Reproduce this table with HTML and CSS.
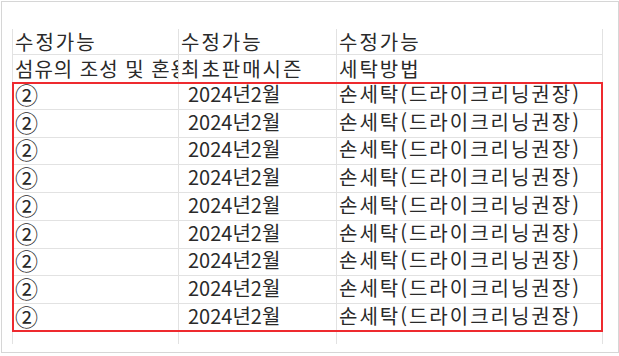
FILE: index.html
```html
<!DOCTYPE html>
<html lang="ko">
<head>
<meta charset="utf-8">
<link rel="stylesheet" href="styles.css">
</head>
<body>
<div class="frame">
  <div class="sheet">
    <div class="row head1">
      <div class="cell">수정가능</div>
      <div class="cell">수정가능</div>
      <div class="cell">수정가능</div>
    </div>
    <div class="row head2">
      <div class="cell tight">섬유의 조성 및 혼용률</div>
      <div class="cell">최초판매시즌</div>
      <div class="cell">세탁방법</div>
    </div>
    <div class="data">
      <div class="row item"><div class="cell c1">②</div><div class="cell c2">2024년2월</div><div class="cell c3">손세탁(드라이크리닝권장)</div></div>
      <div class="row item"><div class="cell c1">②</div><div class="cell c2">2024년2월</div><div class="cell c3">손세탁(드라이크리닝권장)</div></div>
      <div class="row item"><div class="cell c1">②</div><div class="cell c2">2024년2월</div><div class="cell c3">손세탁(드라이크리닝권장)</div></div>
      <div class="row item"><div class="cell c1">②</div><div class="cell c2">2024년2월</div><div class="cell c3">손세탁(드라이크리닝권장)</div></div>
      <div class="row item"><div class="cell c1">②</div><div class="cell c2">2024년2월</div><div class="cell c3">손세탁(드라이크리닝권장)</div></div>
      <div class="row item"><div class="cell c1">②</div><div class="cell c2">2024년2월</div><div class="cell c3">손세탁(드라이크리닝권장)</div></div>
      <div class="row item"><div class="cell c1">②</div><div class="cell c2">2024년2월</div><div class="cell c3">손세탁(드라이크리닝권장)</div></div>
      <div class="row item"><div class="cell c1">②</div><div class="cell c2">2024년2월</div><div class="cell c3">손세탁(드라이크리닝권장)</div></div>
      <div class="row item"><div class="cell c1">②</div><div class="cell c2">2024년2월</div><div class="cell c3">손세탁(드라이크리닝권장)</div></div>
    </div>
    <div class="row tail">
      <div class="cell"></div>
      <div class="cell"></div>
      <div class="cell"></div>
    </div>
  </div>
</div>
</body>
</html>
```

FILE: styles.css
```css
html, body {
  margin: 0;
  padding: 0;
  background: #ffffff;
}

.frame {
  box-sizing: border-box;
  margin: 1px 0 0 1px;
  width: 618px;
  height: 352px;
  border: 1px solid #d6d6d6;
  padding: 27px 0 0 10px;
}

.sheet {
  width: 591px;
  font-family: "Noto Sans CJK KR", "Noto Sans", sans-serif;
  font-size: 20px;
  color: #2a2a2a;
}

.row {
  display: grid;
  grid-template-columns: 166px 158px 267px;
  box-sizing: border-box;
}

.cell {
  box-sizing: border-box;
  border-left: 1px solid #e2e2e2;
  white-space: nowrap;
  padding-left: 2px;
  display: flex;
  align-items: center;
  line-height: 1.1;
  letter-spacing: 2px;
}

.cell:last-child {
  border-right: 1px solid #e2e2e2;
}

.cell.tight {
  letter-spacing: 1px;
  overflow: hidden;
}

.head1 {
  height: 26px;
  border-bottom: 1px solid #e2e2e2;
}

.head2 {
  height: 27px;
}

.data {
  position: relative;
  width: 591px;
}

.data::after {
  content: "";
  position: absolute;
  left: 0;
  top: 0;
  right: 0;
  bottom: 0;
  border: 2px solid #ee2a2f;
  pointer-events: none;
}

.item {
  height: 27.75px;
  border-bottom: 1px solid #e2e2e2;
}

.item .cell {
  padding-bottom: 3px;
}

.item .c1 {
  padding-left: 2px;
  padding-bottom: 2px;
  font-size: 23px;
  line-height: 1;
  letter-spacing: 0;
}

.item .c2 {
  padding-left: 9px;
  letter-spacing: 0;
}

.tail {
  height: 12px;
}
```
